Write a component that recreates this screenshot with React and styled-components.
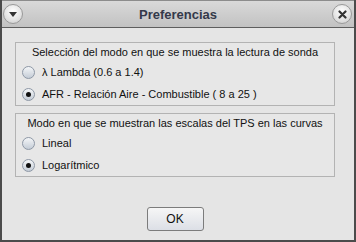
import React from 'react'
import styled, { createGlobalStyle } from 'styled-components'

const GlobalStyle = createGlobalStyle`
  html, body {
    margin: 0;
    padding: 0;
    background: #4a4a4a;
  }
  body {
    font-family: "Liberation Sans", Arial, sans-serif;
  }
`

const Window = styled.div`
  width: 356px;
  height: 242px;
  box-sizing: border-box;
  display: flex;
  flex-direction: column;
  background: #e5e5e5;
  border: 2px solid #4b4b4b;
  border-top: none;
`

const TitleBar = styled.div`
  height: 28px;
  box-sizing: border-box;
  display: flex;
  align-items: center;
  justify-content: space-between;
  padding: 0 2px 0 1px;
  background: linear-gradient(#d9d9d9, #c2c2c2);
  border-top: 1px solid #8c8c8c;
  border-bottom: 1px solid #5e5e5e;
  position: relative;
`

const Title = styled.div`
  position: absolute;
  left: 0;
  right: 0;
  text-align: center;
  font-weight: bold;
  font-size: 13px;
  color: #34394a;
  pointer-events: none;
`

const RoundButton = styled.div`
  width: 20px;
  height: 20px;
  border-radius: 50%;
  box-sizing: border-box;
  border: 1px solid #9a9a9a;
  background: radial-gradient(circle at 50% 35%, #ffffff, #e2e2e2 60%, #c9c9c9);
  display: flex;
  align-items: center;
  justify-content: center;
  z-index: 1;
`

const Body = styled.div`
  flex: 1;
  display: flex;
  flex-direction: column;
  padding: 14px 19px 0 13px;
  gap: 7px;
`

const Group = styled.div`
  border: 1px solid #b3b3b3;
  display: flex;
  flex-direction: column;
  background: #e7e7e7;
`

const GroupTitle = styled.div`
  height: 18px;
  line-height: 18px;
  text-align: center;
  font-size: 11px;
  color: #111;
  white-space: nowrap;
`

const Row = styled.label`
  height: 22px;
  display: flex;
  align-items: center;
  padding-left: 6px;
  gap: 7px;
  font-size: 11px;
  color: #111;
  white-space: nowrap;
`

const Radio = styled.span`
  width: 13px;
  height: 13px;
  box-sizing: border-box;
  border-radius: 50%;
  border: 1px solid #8e98a6;
  background: linear-gradient(#f4f6f8, #c4ccd6);
  display: flex;
  align-items: center;
  justify-content: center;
  &::after {
    content: '';
    width: 5px;
    height: 5px;
    border-radius: 50%;
    background: #111;
    display: ${p => (p.$checked ? 'block' : 'none')};
  }
`

const Footer = styled.div`
  display: flex;
  justify-content: center;
  padding-top: 23px;
`

const OkButton = styled.button`
  width: 57px;
  height: 24px;
  border: 1px solid #7c7c7c;
  border-radius: 3px;
  background: linear-gradient(#f6f6f6, #dcdfe6);
  font-family: "Liberation Sans", Arial, sans-serif;
  font-size: 12px;
  color: #111;
  padding: 0;
`

const groups = [
  {
    title: 'Selección del modo en que se muestra la lectura de sonda',
    options: ['λ Lambda (0.6 a 1.4)', 'AFR - Relación Aire - Combustible ( 8 a 25 )'],
    selected: 1,
  },
  {
    title: 'Modo en que se muestran las escalas del TPS en las curvas',
    options: ['Lineal', 'Logarítmico'],
    selected: 1,
  },
]

const App = () => {
  return (
    <>
      <GlobalStyle />
      <Window>
        <TitleBar>
          <RoundButton>
            <svg width="8" height="5" viewBox="0 0 8 5">
              <path d="M0 0h8L4 5z" fill="#333" />
            </svg>
          </RoundButton>
          <Title>Preferencias</Title>
          <RoundButton>
            <svg width="9" height="9" viewBox="0 0 9 9">
              <path d="M1.5 1.5l6 6M7.5 1.5l-6 6" stroke="#333" strokeWidth="2.2" strokeLinecap="round" />
            </svg>
          </RoundButton>
        </TitleBar>
        <Body>
          {groups.map((g, gi) => (
            <Group key={gi}>
              <GroupTitle>{g.title}</GroupTitle>
              {g.options.map((o, oi) => (
                <Row key={oi}>
                  <Radio $checked={oi === g.selected} />
                  {o}
                </Row>
              ))}
            </Group>
          ))}
          <Footer>
            <OkButton>OK</OkButton>
          </Footer>
        </Body>
      </Window>
    </>
  )
}

export default App
